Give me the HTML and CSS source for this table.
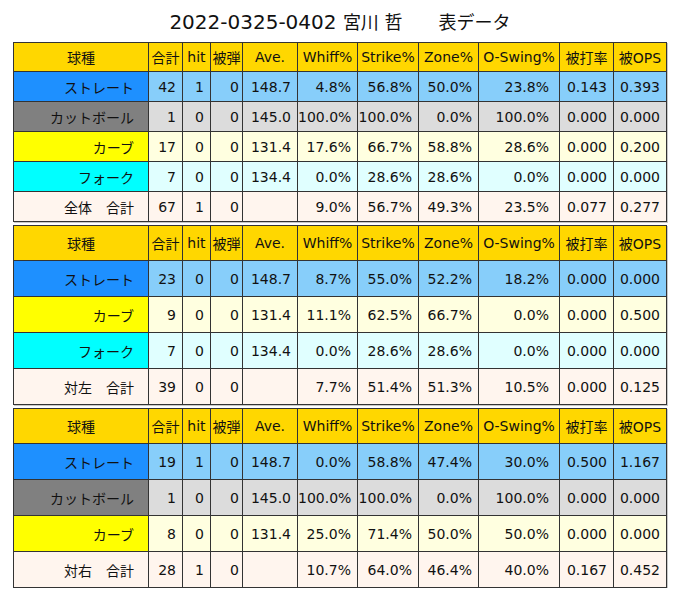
FILE: index.html
```html
<!DOCTYPE html>
<html lang="ja">
<head>
<meta charset="utf-8">
<title>2022-0325-0402 宮川 哲 表データ</title>
<link rel="stylesheet" href="styles.css">
</head>
<body>
<div class="page">
  <div class="title">2022-0325-0402 <span class="jp">宮川 哲　　表データ</span></div>
  <div class="tables">
    <table class="stats compact">
      <colgroup>
        <col class="c-name"><col class="c-total"><col class="c-hit"><col class="c-hr"><col class="c-ave"><col class="c-whiff"><col class="c-strike"><col class="c-zone"><col class="c-oswing"><col class="c-avg"><col class="c-ops">
      </colgroup>
      <tr class="head"><th>球種</th><th>合計</th><th>hit</th><th>被弾</th><th>Ave.</th><th>Whiff%</th><th>Strike%</th><th>Zone%</th><th>O-Swing%</th><th>被打率</th><th>被OPS</th></tr>
      <tr class="fastball"><th>ストレート</th><td>42</td><td>1</td><td>0</td><td>148.7</td><td>4.8%</td><td>56.8%</td><td>50.0%</td><td>23.8%</td><td>0.143</td><td>0.393</td></tr>
      <tr class="cutter"><th>カットボール</th><td>1</td><td>0</td><td>0</td><td>145.0</td><td>100.0%</td><td>100.0%</td><td>0.0%</td><td>100.0%</td><td>0.000</td><td>0.000</td></tr>
      <tr class="curve"><th>カーブ</th><td>17</td><td>0</td><td>0</td><td>131.4</td><td>17.6%</td><td>66.7%</td><td>58.8%</td><td>28.6%</td><td>0.000</td><td>0.200</td></tr>
      <tr class="fork"><th>フォーク</th><td>7</td><td>0</td><td>0</td><td>134.4</td><td>0.0%</td><td>28.6%</td><td>28.6%</td><td>0.0%</td><td>0.000</td><td>0.000</td></tr>
      <tr class="sum"><th>全体　合計</th><td>67</td><td>1</td><td>0</td><td></td><td>9.0%</td><td>56.7%</td><td>49.3%</td><td>23.5%</td><td>0.077</td><td>0.277</td></tr>
    </table>
    <table class="stats">
      <colgroup>
        <col class="c-name"><col class="c-total"><col class="c-hit"><col class="c-hr"><col class="c-ave"><col class="c-whiff"><col class="c-strike"><col class="c-zone"><col class="c-oswing"><col class="c-avg"><col class="c-ops">
      </colgroup>
      <tr class="head"><th>球種</th><th>合計</th><th>hit</th><th>被弾</th><th>Ave.</th><th>Whiff%</th><th>Strike%</th><th>Zone%</th><th>O-Swing%</th><th>被打率</th><th>被OPS</th></tr>
      <tr class="fastball"><th>ストレート</th><td>23</td><td>0</td><td>0</td><td>148.7</td><td>8.7%</td><td>55.0%</td><td>52.2%</td><td>18.2%</td><td>0.000</td><td>0.000</td></tr>
      <tr class="curve"><th>カーブ</th><td>9</td><td>0</td><td>0</td><td>131.4</td><td>11.1%</td><td>62.5%</td><td>66.7%</td><td>0.0%</td><td>0.000</td><td>0.500</td></tr>
      <tr class="fork"><th>フォーク</th><td>7</td><td>0</td><td>0</td><td>134.4</td><td>0.0%</td><td>28.6%</td><td>28.6%</td><td>0.0%</td><td>0.000</td><td>0.000</td></tr>
      <tr class="sum"><th>対左　合計</th><td>39</td><td>0</td><td>0</td><td></td><td>7.7%</td><td>51.4%</td><td>51.3%</td><td>10.5%</td><td>0.000</td><td>0.125</td></tr>
    </table>
    <table class="stats">
      <colgroup>
        <col class="c-name"><col class="c-total"><col class="c-hit"><col class="c-hr"><col class="c-ave"><col class="c-whiff"><col class="c-strike"><col class="c-zone"><col class="c-oswing"><col class="c-avg"><col class="c-ops">
      </colgroup>
      <tr class="head"><th>球種</th><th>合計</th><th>hit</th><th>被弾</th><th>Ave.</th><th>Whiff%</th><th>Strike%</th><th>Zone%</th><th>O-Swing%</th><th>被打率</th><th>被OPS</th></tr>
      <tr class="fastball"><th>ストレート</th><td>19</td><td>1</td><td>0</td><td>148.7</td><td>0.0%</td><td>58.8%</td><td>47.4%</td><td>30.0%</td><td>0.500</td><td>1.167</td></tr>
      <tr class="cutter"><th>カットボール</th><td>1</td><td>0</td><td>0</td><td>145.0</td><td>100.0%</td><td>100.0%</td><td>0.0%</td><td>100.0%</td><td>0.000</td><td>0.000</td></tr>
      <tr class="curve"><th>カーブ</th><td>8</td><td>0</td><td>0</td><td>131.4</td><td>25.0%</td><td>71.4%</td><td>50.0%</td><td>50.0%</td><td>0.000</td><td>0.000</td></tr>
      <tr class="sum"><th>対右　合計</th><td>28</td><td>1</td><td>0</td><td></td><td>10.7%</td><td>64.0%</td><td>46.4%</td><td>40.0%</td><td>0.167</td><td>0.452</td></tr>
    </table>
  </div>
</div>
</body>
</html>
```

FILE: styles.css
```css
html, body {
  margin: 0;
  padding: 0;
  background: #ffffff;
}

body {
  font-family: "DejaVu Sans", "Noto Sans CJK JP", sans-serif;
  color: #111111;
}

.page {
  width: 680px;
}

.title {
  height: 42px;
  line-height: 44px;
  text-align: center;
  font-size: 20px;
  color: #111111;
}

.title .jp {
  font-size: 18px;
}

.tables {
  display: flex;
  flex-direction: column;
  gap: 3px;
  padding-left: 13px;
}

.stats {
  border-collapse: collapse;
  table-layout: fixed;
  width: 653px;
  font-size: 14px;
  box-shadow: 1px 1px 0 #c8c8c8;
}

.stats th,
.stats td {
  border: 1px solid #333333;
  padding: 0 6px 0 0;
  text-align: right;
  white-space: nowrap;
  font-weight: normal;
  vertical-align: middle;
}

.stats tr {
  height: 36px;
}

.stats tr.head {
  height: 35px;
}

.stats.compact tr {
  height: 30px;
}

.stats.compact tr.head {
  height: 29px;
}

.stats tr.head th {
  background: #ffd700;
  text-align: center;
  padding: 0;
}

.stats tr > th:first-child {
  padding-right: 14px;
}

.stats tr.head > th:first-child {
  padding-right: 0;
}

.c-name { width: 135px; }
.c-total { width: 34px; }
.c-hit { width: 28px; }
.c-hr { width: 32px; }
.c-ave { width: 55px; }
.c-whiff { width: 60px; }
.c-strike { width: 61px; }
.c-zone { width: 60px; }
.c-oswing { width: 81px; }
.c-avg { width: 54px; }
.c-ops { width: 53px; }

.stats td:nth-child(4) { padding-right: 3px; }
.stats td:nth-child(9) { padding-right: 10px; }

.fastball th { background: #1e90ff; }
.fastball td { background: #87cefa; }

.cutter th { background: #808080; }
.cutter td { background: #dcdcdc; }

.curve th { background: #ffff00; }
.curve td { background: #ffffe0; }

.fork th { background: #00ffff; }
.fork td { background: #e0ffff; }

.sum th,
.sum td { background: #fff5ee; }
```
